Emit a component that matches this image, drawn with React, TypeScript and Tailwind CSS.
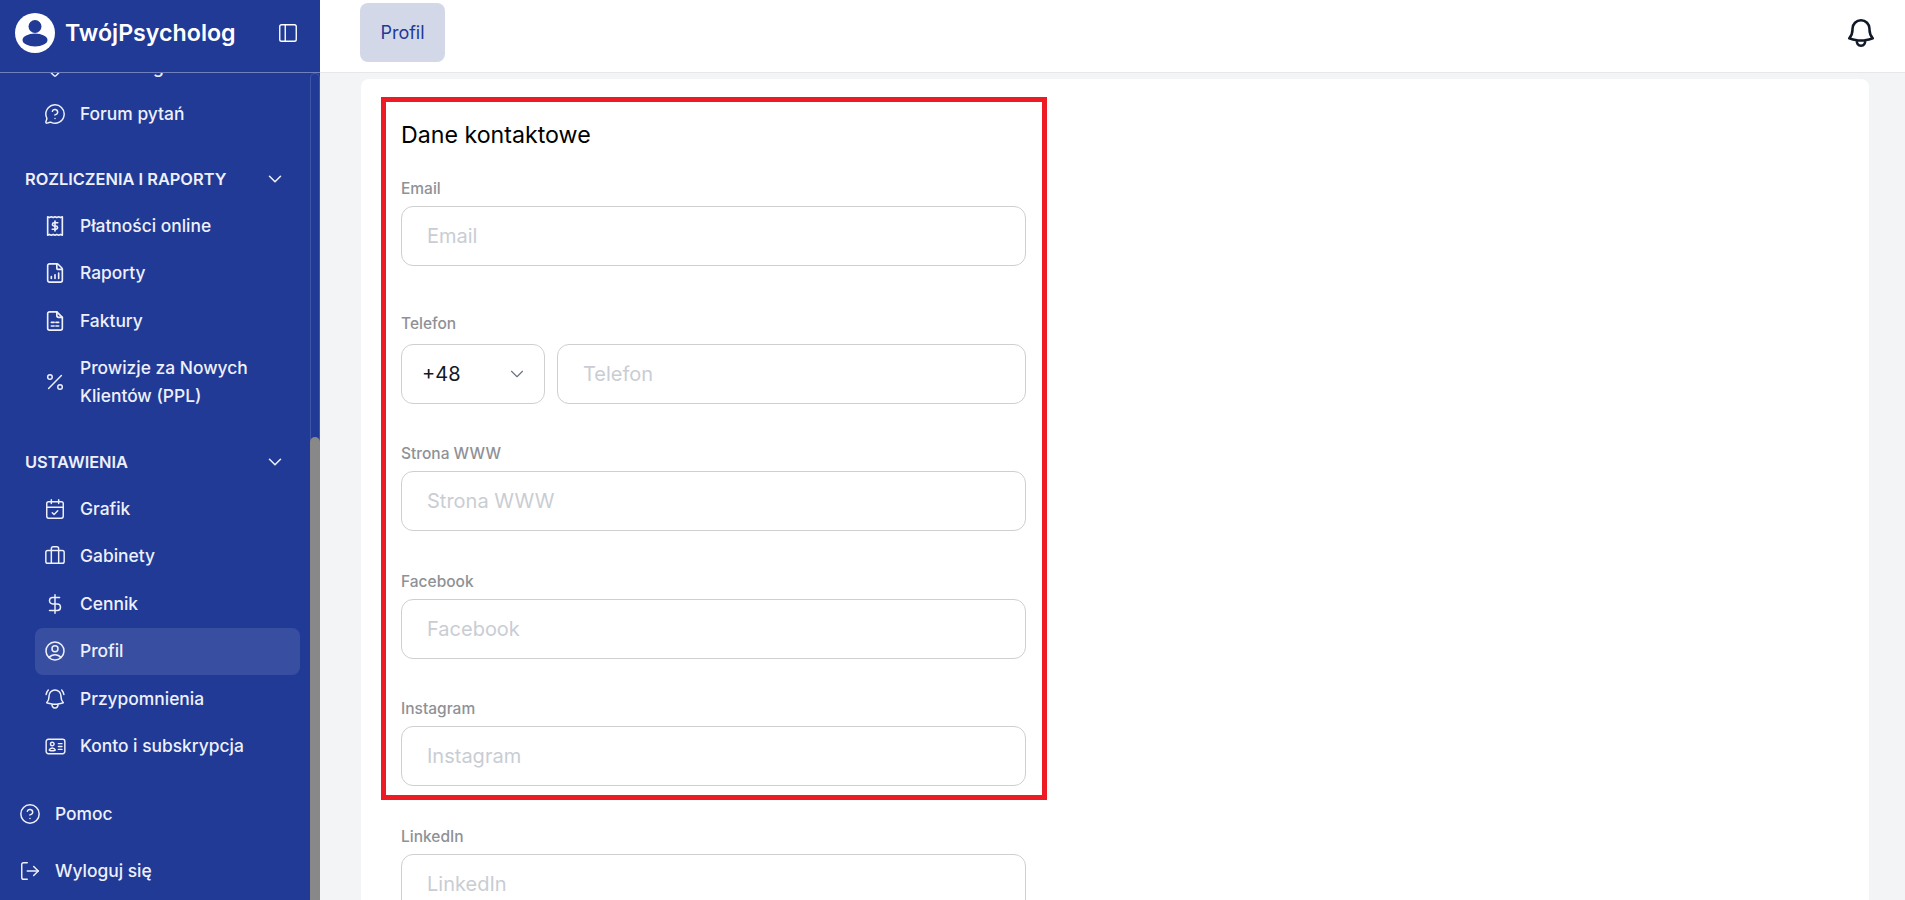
import React from 'react';
import {
  ChevronDown,
  Percent,
  DollarSign,
  LogOut,
  PanelLeft,
  MessageCircleQuestion,
  FileChartColumnIncreasing,
  CalendarCheck,
  Briefcase,
  CircleHelp,
  MapPin,
} from 'lucide-react';
import { HiOutlineUserCircle, HiOutlineBellAlert, HiOutlineIdentification, HiOutlineBell } from 'react-icons/hi2';

const cls = 'w-[22px] h-[22px] shrink-0';
const stroke = 1.6;

function ReceiptIcon() {
  return (
    <svg viewBox="0 0 24 24" fill="none" stroke="currentColor" strokeWidth={1.8} strokeLinejoin="round" strokeLinecap="round" className={cls}>
      <path d="M4 2l2 .8L8 2l2 .8L12 2l2 .8L16 2l2 .8L20 2v20l-2-.8-2 .8-2-.8-2 .8-2-.8-2 .8-2-.8-2 .8z" />
      <path d="M15 8.5h-4a1.75 1.75 0 0 0 0 3.5h2a1.75 1.75 0 0 1 0 3.5H9M12 6.5v11" />
    </svg>
  );
}

function SheetIcon() {
  return (
    <svg viewBox="0 0 24 24" fill="none" stroke="currentColor" strokeWidth={1.8} strokeLinejoin="round" strokeLinecap="round" className={cls}>
      <path d="M14 2H6a2 2 0 0 0-2 2v16a2 2 0 0 0 2 2h12a2 2 0 0 0 2-2V8z" />
      <path d="M14 2v4a2 2 0 0 0 2 2h4" />
      <path d="M8 13.5h3M13 13.5h3M8 17.5h3M13 17.5h3" />
    </svg>
  );
}

function NavItem({ icon, label, active }: { icon: React.ReactNode; label: React.ReactNode; active?: boolean }) {
  return (
    <div className={`ml-[35px] mr-[10px] flex items-center gap-[15px] pl-[10px] pr-3 py-[9.75px] rounded-lg text-[17.4px] leading-[28px] font-medium text-[#eef0fa] ${active ? 'bg-[#384fa1]' : ''}`}>
      <span className="w-[20px] flex justify-center shrink-0">{icon}</span>
      <span>{label}</span>
    </div>
  );
}

function Section({ title }: { title: string }) {
  return (
    <div className="flex items-center justify-between pl-[25px] pr-[24px] h-[24px] text-[16.4px] font-semibold text-[#eef0fa]">
      <span>{title}</span>
      <ChevronDown className="w-[22px] h-[22px]" strokeWidth={1.7} />
    </div>
  );
}

const inputCls = 'h-[60px] rounded-[12px] border border-[#cfcfcf] px-[25px] text-[20px] bg-white placeholder-[#c9cdd3] outline-none';
const labelCls = 'block text-[15.5px] leading-[20px] font-medium text-[#8e9196]';

function Field({ label, className }: { label: string; className: string }) {
  return (
    <div className={className}>
      <label className={`${labelCls} mb-[7px]`}>{label}</label>
      <input placeholder={label} className={`w-full ${inputCls}`} />
    </div>
  );
}

export default function App() {
  return (
    <div className="h-[900px] w-full flex overflow-hidden bg-[#f3f4f6] font-['Inter',sans-serif]">
      <aside className="w-[320px] shrink-0 flex flex-col bg-[#213a96]">
        <div className="h-[73px] shrink-0 flex items-center border-b border-[#6f80bd] pl-[15px] pr-[21px] pb-[6px]">
          <svg viewBox="0 0 40 40" className="w-[40px] h-[40px] shrink-0">
            <circle cx="20" cy="20" r="20" fill="#fff" />
            <circle cx="20" cy="13.5" r="6.5" fill="#213a96" />
            <ellipse cx="20" cy="27" rx="12.5" ry="6.5" fill="#213a96" />
          </svg>
          <span className="ml-[10px] flex-1 text-[23.2px] font-semibold text-white">TwójPsycholog</span>
          <PanelLeft className="w-[22px] h-[22px] text-white" strokeWidth={1.5} />
        </div>
        <div className="flex-1 min-h-0 flex">
          <div className="flex-1 min-w-0 overflow-hidden">
            <div className="mt-[-30px]">
              <NavItem icon={<MapPin className={cls} strokeWidth={stroke} />} label="Marketing" />
              <NavItem icon={<MessageCircleQuestion className={cls} strokeWidth={stroke} />} label="Forum pytań" />
              <div className="h-[29px]" />
              <Section title="ROZLICZENIA I RAPORTY" />
              <div className="h-[11px]" />
              <NavItem icon={<ReceiptIcon />} label="Płatności online" />
              <NavItem icon={<FileChartColumnIncreasing className={cls} strokeWidth={1.8} />} label="Raporty" />
              <NavItem icon={<SheetIcon />} label="Faktury" />
              <NavItem icon={<Percent className={cls} strokeWidth={stroke} />} label={<>Prowizje za Nowych<br />Klientów (PPL)</>} />
              <div className="h-[30px]" />
              <Section title="USTAWIENIA" />
              <div className="h-[11px]" />
              <NavItem icon={<CalendarCheck className={cls} strokeWidth={stroke} />} label="Grafik" />
              <NavItem icon={<Briefcase className={cls} strokeWidth={stroke} />} label="Gabinety" />
              <NavItem icon={<DollarSign className={cls} strokeWidth={stroke} />} label="Cennik" />
              <NavItem icon={<HiOutlineUserCircle className="w-[24px] h-[24px] shrink-0" />} label="Profil" active />
              <NavItem icon={<HiOutlineBellAlert className="w-[24px] h-[24px] shrink-0" />} label="Przypomnienia" />
              <NavItem icon={<HiOutlineIdentification className="w-[23px] h-[23px] shrink-0" />} label="Konto i subskrypcja" />
              <div className="h-[20px]" />
              <div className="flex items-center gap-[15px] pl-[20px] h-[48px] text-[17.4px] font-medium text-[#eef0fa]">
                <CircleHelp className="w-[20px] h-[20px] scale-110" strokeWidth={stroke} />
                <span>Pomoc</span>
              </div>
              <div className="h-[9px]" />
              <div className="flex items-center gap-[15px] pl-[20px] h-[48px] text-[17.4px] font-medium text-[#eef0fa]">
                <LogOut className="w-[20px] h-[20px] scale-110" strokeWidth={stroke} />
                <span>Wyloguj się</span>
              </div>
            </div>
          </div>
          <div className="w-[10px] shrink-0 flex flex-col border border-b-0 border-[#3f55a6] rounded-t-[5px]">
            <div className="flex-1" />
            <div className="h-[463px] bg-[#888888] rounded-t-[5px] -mx-px" />
          </div>
        </div>
      </aside>
      <main className="flex-1 min-w-0 flex flex-col">
        <header className="h-[73px] shrink-0 bg-white border-b border-[#e5e7eb] flex items-center justify-between pl-[40px] pr-[27px]">
          <div className="w-[85px] h-[59px] -mt-[7px] rounded-lg bg-[#d3d8e9] flex items-center justify-center text-[18px] text-[#213a96]">Profil</div>
          <HiOutlineBell className="w-[34px] h-[34px] -mt-[6px] text-[#111827]" strokeWidth={1.8} />
        </header>
        <div className="flex-1 min-h-0 overflow-hidden pl-[41px] pr-[36px] pt-[6px]">
          <div className="bg-white rounded-t-lg pl-[20px] pt-[18px] pb-[40px]">
            <div className="w-[666px] border-[5px] border-[#ed1c24] pl-[15px] pr-[16px] pt-[17px] h-[703px]">
              <h2 className="text-[23.2px] leading-[32px] font-normal text-black">Dane kontaktowe</h2>
              <Field label="Email" className="mt-[28px]" />
              <div className="mt-[48px]">
                <label className={`${labelCls} mb-[10px]`}>Telefon</label>
                <div className="flex gap-[12px]">
                  <div className="w-[144px] shrink-0 h-[60px] rounded-[12px] border border-[#cfcfcf] flex items-center justify-between pl-[20px] pr-[16px] text-[20px] text-[#111827]">
                    <span>+48</span>
                    <ChevronDown className="w-[22px] h-[22px] text-[#6b7280]" strokeWidth={1.2} />
                  </div>
                  <input placeholder="Telefon" className={`flex-1 min-w-0 ${inputCls}`} />
                </div>
              </div>
              <Field label="Strona WWW" className="mt-[40px]" />
              <Field label="Facebook" className="mt-[41px]" />
              <Field label="Instagram" className="mt-[40px]" />
            </div>
            <Field label="LinkedIn" className="w-[625px] ml-[20px] mt-[27px]" />
          </div>
        </div>
      </main>
    </div>
  );
}
